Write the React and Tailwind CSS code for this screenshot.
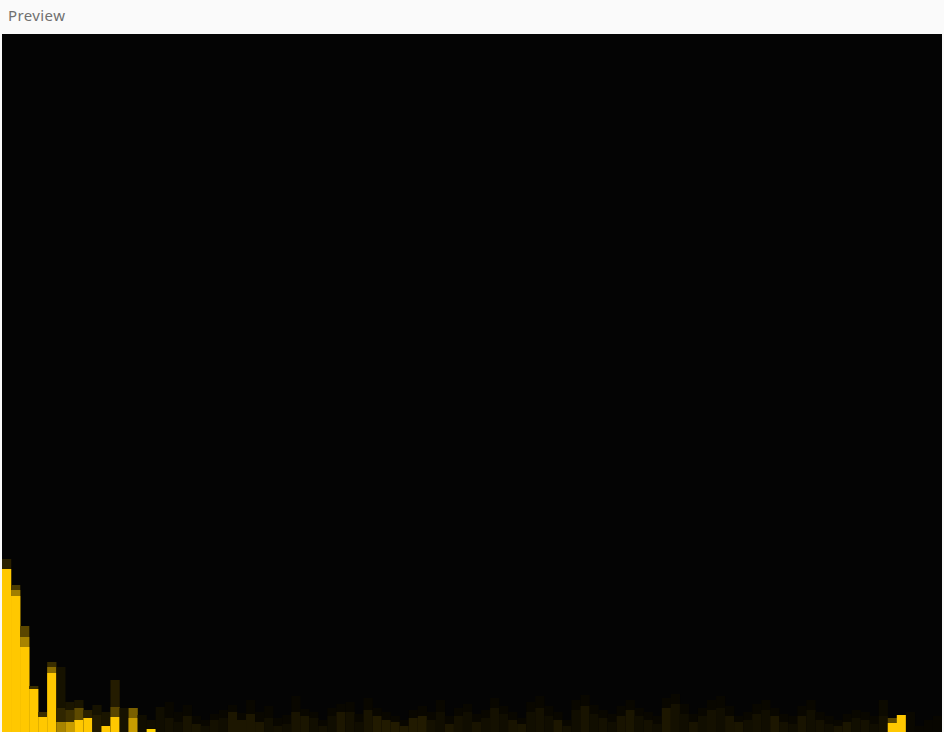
import React from "react";

const TOP = 34;
const W = 940;
const H = 698;
const PITCH = W / 104;

const manual = {
  0: [[559, "#2a2100"], [569, "#ffc800"]],
  1: [[585, "#4a3a00"], [590, "#a07e00"], [596, "#ffc800"]],
  2: [[626, "#5a4600"], [637, "#a88400"], [647, "#ffc800"]],
  3: [[686, "#3a2e00"], [689, "#ffc800"]],
  4: [[712, "#3a2e00"], [717, "#ffc800"]],
  5: [[662, "#3a2e00"], [667, "#8a6c00"], [673, "#ffc800"]],
  6: [[667, "#161200"], [708, "#302600"], [722, "#a88400"]],
  7: [[702, "#1a1500"], [710, "#3e3100"], [722, "#c89c00"]],
  8: [[700, "#1a1500"], [708, "#5e4a00"], [720, "#ffc800"]],
  9: [[710, "#2a2100"], [718, "#ffc800"]],
  10: [[705, "#161200"], [715, "#221b00"]],
  11: [[712, "#1a1500"], [726, "#ffc800"]],
  12: [[680, "#241c00"], [707, "#5a4600"], [717, "#ffc800"]],
  13: [[708, "#161200"]],
  14: [[708, "#7a6000"], [718, "#c89c00"]],
  15: [[715, "#100d00"]],
  16: [[720, "#100d00"], [729, "#ffd400"]],
  17: [[707, "#100d00"]],
  97: [[700, "#0c0a00"], [716, "#141000"]],
  98: [[718, "#5a4600"], [723, "#ffc800"]],
  99: [[715, "#ffc800"]],
  100: [[712, "#0a0800"]],
};

const ghostTops = [
  702, 712, 705, 716, 720, 714, 710, 705, 713, 700, 712, 706, 718, 715, 696, 709,
  712, 720, 708, 704, 702, 714, 698, 708, 712, 716, 720, 710, 706, 712, 700, 716,
  708, 704, 714, 710, 698, 706, 712, 718, 702, 696, 706, 712, 720, 700, 695, 705,
  710, 714, 706, 700, 708, 712, 716, 698, 694, 704, 714, 708, 700, 696, 706, 716,
  712, 704, 700, 708, 714, 716, 706, 700, 712, 716, 720, 714, 710, 712, 716,
];
const lowTops = [
  718, 722, 716, 724, 726, 720, 718, 712, 720, 714, 722, 718, 726, 724, 712, 716,
  718, 726, 716, 712, 712, 722, 710, 716, 720, 722, 726, 718, 716, 720, 712, 724,
  716, 712, 722, 718, 708, 714, 720, 724, 712, 708, 716, 720, 726, 710, 706, 714,
  718, 722, 716, 710, 716, 720, 724, 708, 704, 714, 722, 716, 710, 708, 716, 722,
  720, 714, 710, 716, 722, 724, 716, 710, 720, 724, 726, 722, 718, 720, 724,
];
const lowColors = [
  "#141000", "#100d00", "#181300", "#1a1500", "#110e00", "#141000", "#100d00",
  "#1c1600", "#141000", "#100d00", "#181300", "#110e00",
];

function columnLayers(i) {
  if (manual[i]) return manual[i];
  const k = i - 18;
  const g = ghostTops[k % ghostTops.length];
  const l = lowTops[k % lowTops.length];
  let lc = lowColors[k % lowColors.length];
  if (i >= 41 && i <= 46) lc = "#211a00";
  if (i >= 25 && i <= 28) lc = "#1c1600";
  if (i > 100) return [[g + 6, "#080600"]];
  return [
    [g, "#090700"],
    [l, lc],
  ];
}

function Visualizer() {
  const cols = [];
  for (let i = 0; i < 104; i++) {
    const layers = columnLayers(i);
    layers.forEach(([top, color], j) => {
      const y = top - TOP;
      cols.push(
        <rect
          key={`${i}-${j}`}
          x={i * PITCH}
          y={y}
          width={PITCH + 0.2}
          height={H - y}
          fill={color}
        />
      );
    });
  }
  return (
    <svg width={W} height={H} viewBox={`0 0 ${W} ${H}`} className="block">
      <rect x="0" y="0" width={W} height={H} fill="#040404" />
      {cols}
    </svg>
  );
}

export default function App() {
  return (
    <div className="w-[944px] h-[732px] overflow-hidden bg-[#fafafa] flex flex-col">
      <div
        className="h-[34px] shrink-0 flex items-center px-2 pb-[3px] text-[15px] tracking-[0.4px] text-[#707070]"
        style={{ fontFamily: '"Noto Sans", "Open Sans", sans-serif' }}
      >
        Preview
      </div>
      <div className="mx-[2px] flex-1 bg-[#040404] overflow-hidden">
        <Visualizer />
      </div>
    </div>
  );
}
